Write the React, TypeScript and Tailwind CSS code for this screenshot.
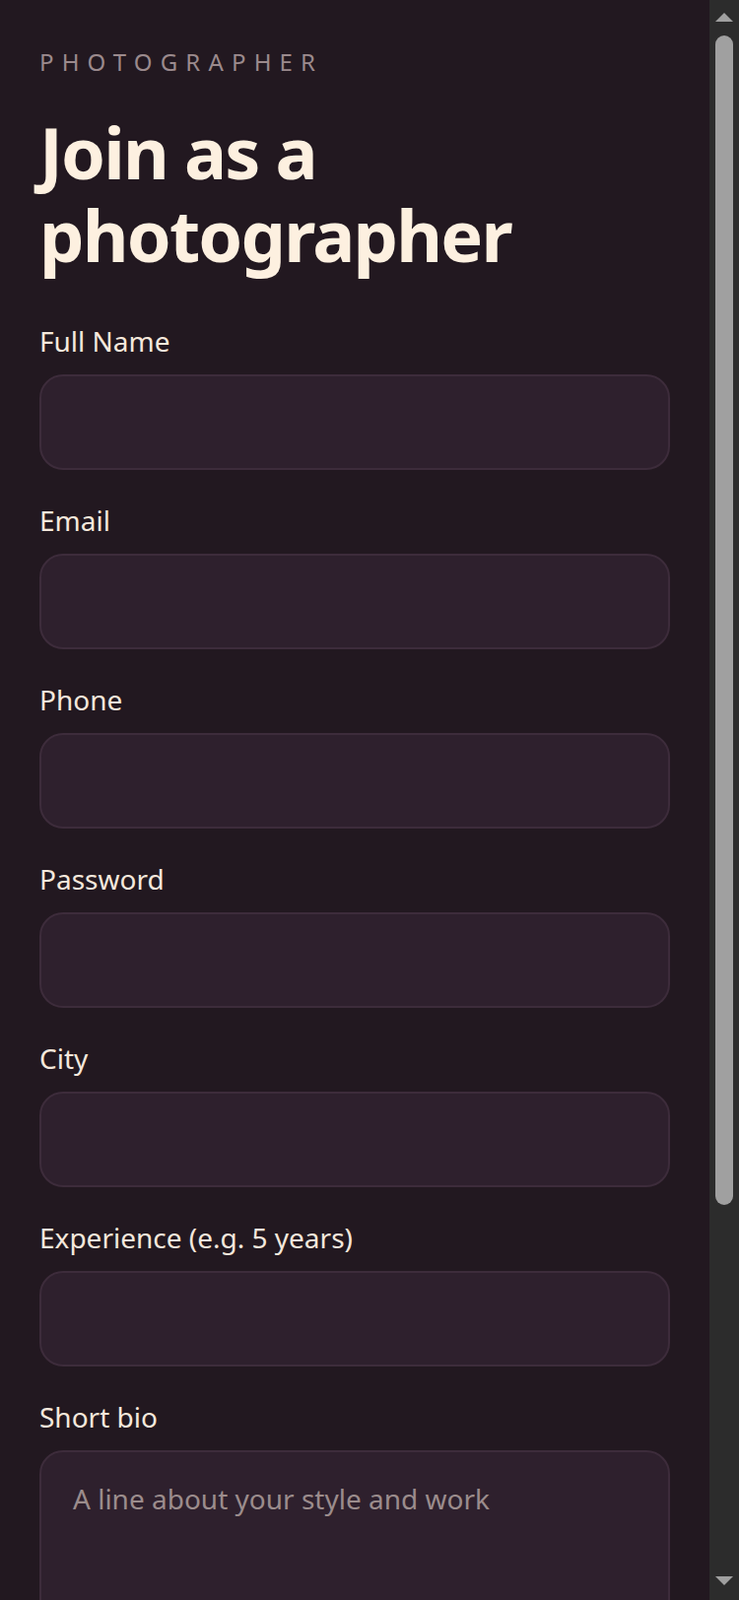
const fields = [
  { id: 'name', label: 'Full Name', type: 'text' },
  { id: 'email', label: 'Email', type: 'email' },
  { id: 'phone', label: 'Phone', type: 'tel' },
  { id: 'password', label: 'Password', type: 'password' },
  { id: 'city', label: 'City', type: 'text' },
  { id: 'experience', label: 'Experience (e.g. 5 years)', type: 'text' },
];

const labelCls = 'mb-[13px] block text-[28px] leading-[42px] text-[#f5e8dc]';
const boxCls =
  'block w-full rounded-[24px] border-2 border-[#3d2c3b] bg-[#2e202d] px-[32px] text-[28px] text-[#f5e8dc] outline-none';

function Field({ id, label, type }: { id: string; label: string; type: string }) {
  return (
    <div>
      <label htmlFor={id} className={labelCls}>
        {label}
      </label>
      <input id={id} type={type} className={`${boxCls} h-[97px]`} />
    </div>
  );
}

// the window's scrollbar, as the reference shows it
function ScrollStrip() {
  return (
    <aside className="flex w-[30px] shrink-0 flex-col bg-[#2c2c2c]">
      <div className="h-[30px] pt-[13px] pl-[6px]">
        <svg width="18" height="9" viewBox="0 0 18 9" className="block">
          <path d="M9 0 L18 9 L0 9 Z" fill="#a0a0a0" />
        </svg>
      </div>
      <div className="flex-1 p-[6px]">
        <div className="h-[1187px] rounded-full bg-[#a0a0a0]" />
      </div>
      <div className="h-[30px] pt-[6px] pl-[6px]">
        <svg width="18" height="9" viewBox="0 0 18 9" className="block">
          <path d="M0 0 L18 0 L9 9 Z" fill="#a0a0a0" />
        </svg>
      </div>
    </aside>
  );
}

export default function App() {
  return (
    <div className="flex h-screen overflow-hidden bg-[#221820] font-['Noto_Sans',sans-serif]">
      <main className="min-w-0 flex-1 overflow-y-auto px-[40px] pt-[47px] pb-[80px]">
        <p className="text-[24px] leading-[32px] tracking-[0.34em] text-[#9b8a8d] uppercase">Photographer</p>
        <h1 className="mt-[33px] text-[72px] leading-[84px] font-bold tracking-tight text-[#fdf0e0]">
          Join as a photographer
        </h1>

        <form className="mt-[45px] flex flex-col gap-[30px]">
          {fields.map((f) => (
            <Field key={f.id} {...f} />
          ))}
          <div>
            <label htmlFor="bio" className={labelCls}>
              Short bio
            </label>
            <textarea
              id="bio"
              rows={4}
              placeholder="A line about your style and work"
              className={`${boxCls} resize-none py-[26px] leading-[42px] placeholder:text-[#9b8c8c]`}
            />
          </div>
        </form>
      </main>
      <ScrollStrip />
    </div>
  );
}
